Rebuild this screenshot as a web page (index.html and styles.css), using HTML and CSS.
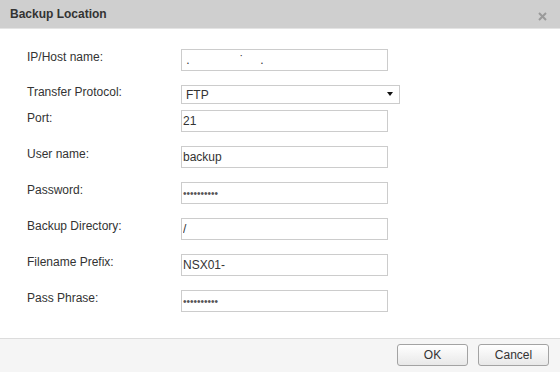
FILE: index.html
```html
<!DOCTYPE html>
<html>
    <head>
        <meta charset="utf-8">
        <title>Backup Location</title>
        <link rel="stylesheet" href="styles.css">
    </head>
    <body>
        <div class="dialog">
            <div class="titleBar">
                <span class="title">Backup Location</span>
                <span class="close">
                    <svg width="9" height="9" viewBox="0 0 9 9">
                        <path d="M1 1 L8 8 M8 1 L1 8" stroke="#9a9a9a" stroke-width="2"/>
                    </svg>
                </span>
            </div>

            <form class="formBody">
                <div class="row">
                    <label class="label">IP/Host name:</label>
                    <input class="field" type="text" value=" .               &#729;     .">
                </div>
                <div class="row tight">
                    <label class="label">Transfer Protocol:</label>
                    <div class="selectWrap">
                        <select class="select">
                            <option>FTP</option>
                            <option>SFTP</option>
                        </select>
                        <span class="arrow"></span>
                    </div>
                </div>
                <div class="row">
                    <label class="label">Port:</label>
                    <input class="field" type="text" value="21">
                </div>
                <div class="row">
                    <label class="label">User name:</label>
                    <input class="field" type="text" value="backup">
                </div>
                <div class="row">
                    <label class="label">Password:</label>
                    <input class="field secret" type="password" value="backupbkup">
                </div>
                <div class="row">
                    <label class="label">Backup Directory:</label>
                    <input class="field" type="text" value="/">
                </div>
                <div class="row">
                    <label class="label">Filename Prefix:</label>
                    <input class="field" type="text" value="NSX01-">
                </div>
                <div class="row">
                    <label class="label">Pass Phrase:</label>
                    <input class="field secret" type="password" value="backupbkup">
                </div>
            </form>

            <div class="footer">
                <button class="button">OK</button>
                <button class="button">Cancel</button>
            </div>
        </div>
    </body>
</html>
```

FILE: styles.css
```css
* {
    margin: 0;
    padding: 0;
    box-sizing: border-box;
}

body {
    background-color: white;
    font-family: 'Liberation Sans', Arial, sans-serif;
    font-size: 12px;
    color: #333;
}

.dialog {
    width: 560px;
    height: 372px;
    display: flex;
    flex-flow: column nowrap;
    background-color: white;
}

.titleBar {
    height: 29px;
    background-color: #cfcfcf;
    border-bottom: 1px solid #e4e4e4;
    display: flex;
    justify-content: space-between;
    align-items: flex-start;
}
.title {
    padding: 7px 0 0 10px;
    font-weight: bold;
    line-height: 14px;
    color: #333;
}
.close {
    display: block;
    margin: 12px 13px 0 0;
    height: 9px;
}
.close svg {
    display: block;
}

.formBody {
    flex: 1;
    padding: 20px 0 0 27px;
}

.row {
    display: flex;
    flex-flow: row nowrap;
    align-items: flex-start;
    margin-bottom: 14px;
}
.row.tight {
    margin-bottom: 6px;
}

.label {
    width: 154px;
    padding-top: 1px;
    line-height: 14px;
    color: #333;
}
.row.tight .label {
    padding-top: 0;
}

.field {
    width: 207px;
    height: 22px;
    border: 1px solid #ccc;
    padding: 0 1px;
    font-family: 'Liberation Sans', Arial, sans-serif;
    font-size: 12px;
    color: #333;
    background-color: white;
    outline: none;
}
.field.secret {
    font-size: 10px;
    color: #555;
    letter-spacing: 0;
}

.selectWrap {
    position: relative;
    width: 219px;
    height: 19px;
}
.select {
    width: 219px;
    height: 19px;
    border: 1px solid #ccc;
    border-radius: 0;
    padding: 0 0 0 4px;
    font-family: 'Liberation Sans', Arial, sans-serif;
    font-size: 12px;
    color: #333;
    background-color: white;
    appearance: none;
    -webkit-appearance: none;
    outline: none;
}
.arrow {
    position: absolute;
    top: 7px;
    right: 7px;
    width: 0;
    height: 0;
    border-left: 3px solid transparent;
    border-right: 3px solid transparent;
    border-top: 4px solid #111;
}

.footer {
    height: 34px;
    background-color: #f5f5f5;
    border-top: 1px solid #dcdcdc;
    display: flex;
    justify-content: flex-end;
    align-items: flex-start;
    gap: 10px;
    padding: 5px 11px 0 0;
}

.button {
    width: 71px;
    height: 22px;
    border: 1px solid #a3a3a3;
    border-radius: 3px;
    background: linear-gradient(#ffffff, #e8e8e8);
    font-family: 'Liberation Sans', Arial, sans-serif;
    font-size: 12px;
    color: #333;
}
```
